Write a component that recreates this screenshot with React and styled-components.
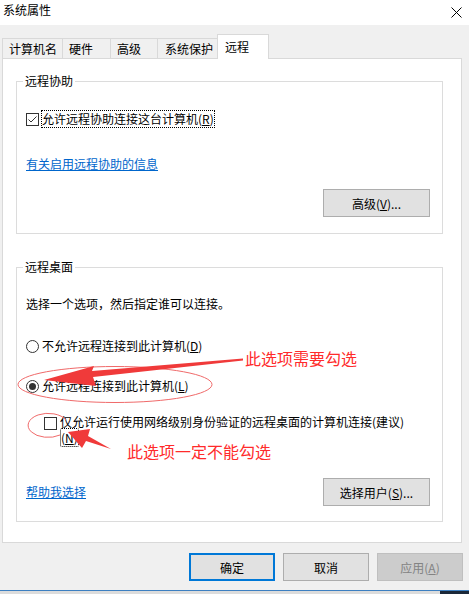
import React from 'react'
import styled, { createGlobalStyle } from 'styled-components'

const GlobalStyle = createGlobalStyle`
    html, body {
        margin: 0;
        padding: 0;
        background: #f0f0f0;
    }
    body {
        font-family: "Noto Sans CJK SC", "Noto Sans", sans-serif;
        font-size: 12px;
        color: #000;
    }
`;

const Window = styled.div`
    position: relative;
    width: 469px;
    height: 594px;
    background: #f0f0f0;
    display: flex;
    flex-direction: column;
    overflow: hidden;
`;

const TitleBar = styled.div`
    height: 25px;
    background: #fff;
    display: flex;
    justify-content: space-between;
    padding: 1px 7px 0 3px;
    box-sizing: border-box;
    line-height: 17px;
`;

const Close = styled.div`
    padding-top: 3px;
`;

const TabRow = styled.div`
    height: 24px;
    margin-top: 9px;
    padding-left: 2px;
    display: flex;
    align-items: flex-end;
`;

const Tab = styled.div`
    box-sizing: border-box;
    width: ${({ $w }) => $w}px;
    height: ${({ $active }) => ($active ? 25 : 20)}px;
    margin-left: ${({ $first }) => ($first ? 0 : -1)}px;
    margin-bottom: ${({ $active }) => ($active ? -1 : 0)}px;
    padding-left: ${({ $pl }) => $pl || 6}px;
    border: 1px solid #d9d9d9;
    border-bottom: none;
    background: ${({ $active }) => ($active ? '#fff' : '#f0f0f0')};
    position: relative;
    z-index: ${({ $active }) => ($active ? 2 : 0)};
    display: flex;
    align-items: center;
    line-height: 16px;
`;

const Panel = styled.div`
    box-sizing: border-box;
    width: 460px;
    height: 485px;
    margin-left: 2px;
    border: 1px solid #d9d9d9;
    background: #fff;
    padding: 0 18px 0 13px;
    display: flex;
    flex-direction: column;
`;

const Group = styled.fieldset`
    margin: ${({ $mt }) => $mt}px 0 0;
    padding: 0;
    border: 1px solid #dcdcdc;
    min-width: 0;
`;

const Legend = styled.legend`
    margin-left: 6px;
    padding: 0 2px;
    line-height: 16px;
`;

const GroupBody = styled.div`
    padding: 0 12px ${({ $pb }) => $pb}px 9px;
    display: flex;
    flex-direction: column;
`;

const Row = styled.div`
    display: flex;
    align-items: ${({ $top }) => ($top ? 'flex-start' : 'center')};
    justify-content: ${({ $spread }) => ($spread ? 'space-between' : 'flex-start')};
    margin-top: ${({ $mt }) => $mt}px;
    margin-left: ${({ $ml }) => $ml || 0}px;
    min-height: ${({ $h }) => $h || 16}px;
    line-height: 16px;
`;

const Box = styled.span`
    box-sizing: border-box;
    width: 13px;
    height: 13px;
    border: 1px solid #333;
    background: #fff;
    display: inline-flex;
    align-items: center;
    justify-content: center;
    flex-shrink: 0;
    margin-top: ${({ $mt }) => $mt || 0}px;
`;

const Radio = styled.span`
    box-sizing: border-box;
    width: 13px;
    height: 13px;
    border: 1px solid #333;
    border-radius: 50%;
    background: #fff;
    display: inline-flex;
    align-items: center;
    justify-content: center;
    flex-shrink: 0;
    &::after {
        content: '';
        width: 7px;
        height: 7px;
        border-radius: 50%;
        background: ${({ $on }) => ($on ? '#333' : 'transparent')};
    }
`;

const Label = styled.span`
    margin-left: ${({ $ml }) => $ml || 3}px;
    line-height: 16px;
`;

const FocusLabel = styled.span`
    margin-left: 2px;
    border: 1px dotted #000;
    line-height: 16px;
`;

const FocusBit = styled.span`
    border: 1px dotted #000;
    border-radius: 2px;
`;

const Link = styled.a`
    color: #0066cc;
    text-decoration: underline;
    line-height: 16px;
`;

const Button = styled.button`
    box-sizing: border-box;
    width: ${({ $w }) => $w || 107}px;
    height: 28px;
    margin: 0;
    padding: 0;
    font-family: inherit;
    font-size: 12px;
    color: ${({ $disabled }) => ($disabled ? '#838383' : '#000')};
    background: ${({ $disabled }) => ($disabled ? '#cccccc' : '#e1e1e1')};
    border: ${({ $default, $disabled }) =>
        $default ? '2px solid #0078d7' : $disabled ? '1px solid #bfbfbf' : '1px solid #adadad'};
`;

const ButtonRow = styled.div`
    display: flex;
    justify-content: flex-end;
    margin-top: ${({ $mt }) => $mt}px;
`;

const Footer = styled.div`
    display: flex;
    gap: 8px;
    margin-top: 10px;
    padding-left: 189px;
`;

const Taskbar = styled.div`
    margin-top: auto;
    height: 3px;
    border-top: 1px solid #3c7fc1;
    background: linear-gradient(to right, #dcdcdc 0, #dcdcdc 440px, #1b2838 440px);
`;

const Overlay = styled.svg`
    position: absolute;
    left: 0;
    top: 0;
    pointer-events: none;
    z-index: 5;
`;

const Note = styled.div`
    position: absolute;
    left: ${({ $x }) => $x}px;
    top: ${({ $y }) => $y}px;
    font-size: 16px;
    line-height: 20px;
    color: #ff2b2b;
    white-space: nowrap;
    z-index: 6;
`;

const Check = () => (
    <svg width="11" height="11" viewBox="0 0 11 11">
        <polyline points="1.5,5.5 4,8 9.5,2.5" fill="none" stroke="#333" strokeWidth="1" />
    </svg>
)

const CloseIcon = () => (
    <svg width="11" height="11" viewBox="0 0 11 11">
        <path d="M0.5 0.5 L10.5 10.5 M10.5 0.5 L0.5 10.5" stroke="#000" strokeWidth="1" />
    </svg>
)

const tabs = [
    { name: '计算机名', w: 61, pl: 6 },
    { name: '硬件', w: 49, pl: 6 },
    { name: '高级', w: 48, pl: 6 },
    { name: '系统保护', w: 61, pl: 7 },
    { name: '远程', w: 52, pl: 7, active: true },
]

const App = () => {
    return (
        <Window>
            <GlobalStyle />
            <TitleBar>
                <span>系统属性</span>
                <Close><CloseIcon /></Close>
            </TitleBar>

            <TabRow>
                {tabs.map((t, i) => (
                    <Tab key={t.name} $w={t.w} $pl={t.pl} $first={i === 0} $active={t.active}>
                        {t.name}
                    </Tab>
                ))}
            </TabRow>

            <Panel>
                <Group $mt={14}>
                    <Legend>远程协助</Legend>
                    <GroupBody $pb={16}>
                        <Row $mt={21} $h={18}>
                            <Box><Check /></Box>
                            <FocusLabel>允许远程协助连接这台计算机(<u>R</u>)</FocusLabel>
                        </Row>
                        <Row $mt={28}>
                            <Link>有关启用远程协助的信息</Link>
                        </Row>
                        <ButtonRow $mt={17}>
                            <Button>高级(<u>V</u>)...</Button>
                        </ButtonRow>
                    </GroupBody>
                </Group>

                <Group $mt={25}>
                    <Legend>远程桌面</Legend>
                    <GroupBody $pb={15}>
                        <Row $mt={21}>选择一个选项，然后指定谁可以连接。</Row>
                        <Row $mt={25} $h={18}>
                            <Radio />
                            <Label>不允许远程连接到此计算机(<u>D</u>)</Label>
                        </Row>
                        <Row $mt={22} $h={18}>
                            <Radio $on />
                            <Label>允许远程连接到此计算机(<u>L</u>)</Label>
                        </Row>
                        <Row $mt={19} $ml={18} $top>
                            <Box $mt={3} />
                            <Label>
                                仅允许运行使用网络级别身份验证的远程桌面的计算机连接(建议)
                                <br />
                                <FocusBit>(<u>N</u>)</FocusBit>
                            </Label>
                        </Row>
                        <Row $mt={32} $h={28} $spread>
                            <Link>帮助我选择</Link>
                            <Button>选择用户(<u>S</u>)...</Button>
                        </Row>
                    </GroupBody>
                </Group>
            </Panel>

            <Footer>
                <Button $w={86} $default>确定</Button>
                <Button $w={86}>取消</Button>
                <Button $w={86} $disabled>应用(<u>A</u>)</Button>
            </Footer>

            <Taskbar />

            <Overlay width="469" height="594" viewBox="0 0 469 594">
                <ellipse cx="115" cy="384.5" rx="97" ry="18" fill="none" stroke="#f06a6a" strokeWidth="1" />
                <polygon
                    points="243,358.5 92,371 94,366 44,380 96,386 93,377 243,360.5"
                    fill="#f03a3a"
                />
                <path d="M66 420 A20 12 0 1 0 60 435" fill="none" stroke="#f06a6a" strokeWidth="1" />
                <polygon
                    points="68,432 90,429 88,436 111,449 86,441 82,448"
                    fill="#f03a3a"
                />
            </Overlay>
            <Note $x={245} $y={348}>此选项需要勾选</Note>
            <Note $x={127} $y={441}>此选项一定不能勾选</Note>
        </Window>
    )
}

export default App
